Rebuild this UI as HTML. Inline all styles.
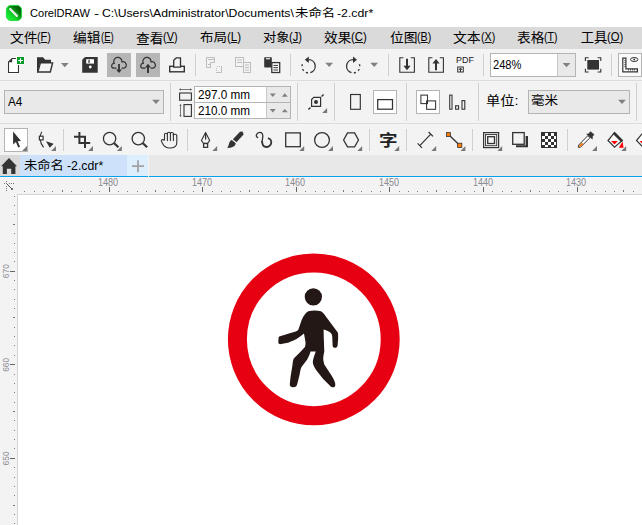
<!DOCTYPE html>
<html lang="zh-CN"><head><meta charset="utf-8"><title>CorelDRAW</title>
<style>
html,body{margin:0;padding:0;background:#fff;}
body{width:642px;height:525px;overflow:hidden;position:relative;font-family:"Liberation Sans","Noto Sans CJK SC",sans-serif;color:#000;}
#app{position:absolute;left:0;top:0;width:642px;height:525px;overflow:hidden;background:#fff;}
.abs{position:absolute;}
.t{position:absolute;white-space:nowrap;line-height:1;transform-origin:0 0;}
.menu{font-size:13px;top:30px;}
.menu u{text-decoration:underline;text-underline-offset:1px;}
svg{position:absolute;left:0;top:0;}
</style></head>
<body><div id="app">
<div class="abs" style="left:0;top:0;width:642px;height:27px;background:#fff"></div>
<div class="abs" style="left:0;top:27px;width:642px;height:22px;background:#dadada"></div>
<div class="abs" style="left:0;top:49px;width:642px;height:106px;background:#f3f3f3"></div>
<div class="abs" style="left:0;top:80px;width:642px;height:1px;background:#dcdcdc"></div>
<div class="abs" style="left:0;top:123px;width:642px;height:1px;background:#dcdcdc"></div>
<div class="abs" style="left:0;top:155px;width:642px;height:21px;background:#e8e8e8"></div>
<div class="abs" style="left:0;top:155px;width:20px;height:21px;background:#d9d9d9"></div>
<div class="abs" style="left:20px;top:155px;width:107px;height:21px;background:#cde2fa"></div>
<div class="abs" style="left:127px;top:155px;width:21px;height:21px;background:#ddeefd"></div>
<div class="abs" style="left:0;top:176px;width:642px;height:1px;background:#05a0ef"></div>
<div class="abs" style="left:0;top:177px;width:642px;height:1px;background:#faf5f0"></div>
<div class="abs" style="left:0;top:178px;width:642px;height:17px;background:#f3f3f3"></div>
<div class="abs" style="left:0;top:178px;width:18px;height:347px;background:#f3f3f3"></div>
<div class="abs" style="left:18px;top:195px;width:624px;height:330px;background:#fff"></div>
<div class="abs" style="left:18px;top:194px;width:624px;height:1px;background:#d5d5d5"></div>
<div class="abs" style="left:17px;top:194px;width:1px;height:331px;background:#d5d5d5"></div>
<div class="abs" style="left:107px;top:53px;width:24px;height:24px;background:#b6b6b6"></div>
<div class="abs" style="left:136px;top:53px;width:24px;height:24px;background:#b6b6b6"></div>
<div class="abs" style="left:490px;top:53px;width:84px;height:22px;background:#fff;border:1px solid #b4b4b4"></div>
<div class="abs" style="left:557px;top:54px;width:17px;height:22px;background:#e9e9e9;border-left:1px solid #c8c8c8"></div>
<div class="abs" style="left:618px;top:53px;width:22px;height:22px;background:#fafafa;border:1px solid #b4b4b4"></div>
<div class="abs" style="left:4px;top:90px;width:158px;height:22px;background:#e9e9e9;border:1px solid #b4b4b4"></div>
<div class="abs" style="left:194px;top:86px;width:95px;height:31px;background:#fff;border:1px solid #b4b4b4"></div>
<div class="abs" style="left:266px;top:87px;width:23px;height:31px;background:#e9e9e9;border-left:1px solid #c8c8c8"></div>
<div class="abs" style="left:195px;top:102px;width:95px;height:1px;background:#b4b4b4"></div>
<div class="abs" style="left:373px;top:90px;width:22px;height:22px;background:#fff;border:1px solid #b4b4b4"></div>
<div class="abs" style="left:416px;top:90px;width:22px;height:22px;background:#fff;border:1px solid #b4b4b4"></div>
<div class="abs" style="left:528px;top:90px;width:100px;height:22px;background:#e9e9e9;border:1px solid #b4b4b4"></div>
<div class="abs" style="left:4px;top:128px;width:22px;height:22px;background:#fff;border:1px solid #b4b4b4"></div>
<div class="t" id="ta" style="left:30.42px;top:8.02px;font-size:12px;font-weight:normal;transform:scale(0.9243,0.9459);">CorelDRAW</div>
<div class="t" id="tb" style="left:94.36px;top:8.02px;font-size:12px;font-weight:normal;transform:scale(1.2800,0.9459);">-</div>
<div class="t" id="tc" style="left:102.06px;top:8.02px;font-size:12px;font-weight:normal;transform:scale(1.0203,0.9459);">C:\Users\Administrator\Documents\</div>
<div class="t" id="td" style="left:294.50px;top:8.44px;font-size:12.5px;font-weight:normal;transform:scale(1.0733,0.9432);">未命名</div>
<div class="t" id="te" style="left:337.49px;top:8.02px;font-size:12px;font-weight:normal;transform:scale(1.0256,0.9459);">-2.cdr*</div>
<div class="t" id="m0a" style="left:10.45px;top:31.53px;font-size:13.3px;font-weight:normal;transform:scale(1.0353,0.9527);">文件</div>
<div class="t" id="m0b" style="left:37.27px;top:31.38px;font-size:13px;font-weight:normal;transform:scale(0.8331,0.9155);">(<u>F</u>)</div>
<div class="t" id="m1a" style="left:73.26px;top:31.42px;font-size:13.3px;font-weight:normal;transform:scale(1.0314,0.9615);">编辑</div>
<div class="t" id="m1b" style="left:100.66px;top:31.38px;font-size:13px;font-weight:normal;transform:scale(0.7370,0.9155);">(<u>E</u>)</div>
<div class="t" id="m2a" style="left:136.30px;top:31.55px;font-size:13.3px;font-weight:normal;transform:scale(1.0320,0.9704);">查看</div>
<div class="t" id="m2b" style="left:163.17px;top:31.25px;font-size:13px;font-weight:normal;transform:scale(0.8378,0.9250);">(<u>V</u>)</div>
<div class="t" id="m3a" style="left:200.36px;top:31.52px;font-size:13.3px;font-weight:normal;transform:scale(1.0171,0.9357);">布局</div>
<div class="t" id="m3b" style="left:226.52px;top:31.25px;font-size:13px;font-weight:normal;transform:scale(0.8912,0.9250);">(<u>L</u>)</div>
<div class="t" id="m4a" style="left:262.92px;top:31.52px;font-size:13.3px;font-weight:normal;transform:scale(1.0040,0.9357);">对象</div>
<div class="t" id="m4b" style="left:289.25px;top:31.38px;font-size:13px;font-weight:normal;transform:scale(0.8593,0.9155);">(<u>J</u>)</div>
<div class="t" id="m5a" style="left:324.23px;top:31.53px;font-size:13.3px;font-weight:normal;transform:scale(1.0257,0.9441);">效果</div>
<div class="t" id="m5b" style="left:351.13px;top:31.38px;font-size:13px;font-weight:normal;transform:scale(0.8788,0.9155);">(<u>C</u>)</div>
<div class="t" id="m6a" style="left:389.72px;top:31.53px;font-size:13.3px;font-weight:normal;transform:scale(1.0400,0.9527);">位图</div>
<div class="t" id="m6b" style="left:416.78px;top:31.38px;font-size:13px;font-weight:normal;transform:scale(0.8252,0.9155);">(<u>B</u>)</div>
<div class="t" id="m7a" style="left:453.25px;top:31.53px;font-size:13.3px;font-weight:normal;transform:scale(1.0365,0.9527);">文本</div>
<div class="t" id="m7b" style="left:480.58px;top:31.25px;font-size:13px;font-weight:normal;transform:scale(0.8252,0.9250);">(<u>X</u>)</div>
<div class="t" id="m8a" style="left:517.20px;top:31.53px;font-size:13.3px;font-weight:normal;transform:scale(1.0257,0.9527);">表格</div>
<div class="t" id="m8b" style="left:544.09px;top:31.38px;font-size:13px;font-weight:normal;transform:scale(0.8066,0.9155);">(<u>T</u>)</div>
<div class="t" id="m9a" style="left:580.67px;top:30.70px;font-size:13.3px;font-weight:normal;transform:scale(1.0000,1.0077);">工具</div>
<div class="t" id="m9b" style="left:607.24px;top:31.38px;font-size:13px;font-weight:normal;transform:scale(0.8696,0.9155);">(<u>O</u>)</div>
<div class="t" id="z" style="left:493.37px;top:58.21px;font-size:13px;font-weight:normal;transform:scale(0.8556,1.0054);">248%</div>
<div class="t" id="a4" style="left:7.90px;top:94.79px;font-size:13px;font-weight:normal;transform:scale(0.9008,1.0192);">A4</div>
<div class="t" id="w" style="left:197.74px;top:88.18px;font-size:13px;font-weight:normal;transform:scale(0.9009,0.9730);">297.0 mm</div>
<div class="t" id="h" style="left:197.74px;top:103.80px;font-size:13px;font-weight:normal;transform:scale(0.9009,0.9622);">210.0 mm</div>
<div class="t" id="unit" style="left:486.22px;top:95.26px;font-size:12.7px;font-weight:normal;transform:scale(1.1185,0.9882);">单位:</div>
<div class="t" id="mm" style="left:531.37px;top:95.26px;font-size:12.7px;font-weight:normal;transform:scale(1.0653,0.9786);">毫米</div>
<div class="t" id="taba" style="left:24.30px;top:160.47px;font-size:12.5px;font-weight:normal;transform:scale(1.0648,0.9684);">未命名</div>
<div class="t" id="tabb" style="left:67.39px;top:158.96px;font-size:12.5px;font-weight:normal;transform:scale(0.9837,1.0703);">-2.cdr*</div>
<div class="t" id="pdf" style="left:456.16px;top:57.32px;font-size:8px;font-weight:normal;transform:scale(1.1158,1.0800);color:#1a1a1a;">PDF</div>
<div class="t" id="zi" style="left:378.99px;top:133.45px;font-size:16px;font-weight:bold;transform:scale(1.1579,0.9701);color:#222;">字</div>
<div class="t" id="r0" style="left:98.12px;top:178.00px;font-size:9px;font-weight:normal;transform:scale(1.0053,1.1200);color:#8a8a92;">1480</div>
<div class="t" id="r1" style="left:191.72px;top:178.00px;font-size:9px;font-weight:normal;transform:scale(1.0053,1.1200);color:#8a8a92;">1470</div>
<div class="t" id="r2" style="left:285.32px;top:178.00px;font-size:9px;font-weight:normal;transform:scale(1.0053,1.1200);color:#8a8a92;">1460</div>
<div class="t" id="r3" style="left:378.92px;top:178.00px;font-size:9px;font-weight:normal;transform:scale(1.0053,1.1200);color:#8a8a92;">1450</div>
<div class="t" id="r4" style="left:472.52px;top:178.00px;font-size:9px;font-weight:normal;transform:scale(1.0053,1.1200);color:#8a8a92;">1440</div>
<div class="t" id="r5" style="left:566.12px;top:178.00px;font-size:9px;font-weight:normal;transform:scale(1.0053,1.1200);color:#8a8a92;">1430</div>
<svg width="642" height="525" viewBox="0 0 642 525">
<defs><linearGradient id="lg" x1="0.9" y1="0.1" x2="0.1" y2="0.9"><stop offset="0" stop-color="#005200"/><stop offset="0.3" stop-color="#087c10"/><stop offset="0.62" stop-color="#12cc26"/><stop offset="1" stop-color="#18f838"/></linearGradient></defs>
<rect x="6.4" y="5.4" width="15.2" height="15.2" rx="4.6" fill="url(#lg)" stroke="#22dc40" stroke-width="1"/>
<path d="M10.2 9 L16.9 15.9" stroke="#e6efe6" stroke-width="2.3" stroke-linecap="round"/>
<rect x="195" y="54" width="1" height="22" fill="#cfcfcf"/>
<rect x="290" y="54" width="1" height="22" fill="#cfcfcf"/>
<rect x="388" y="54" width="1" height="22" fill="#cfcfcf"/>
<rect x="483" y="54" width="1" height="22" fill="#cfcfcf"/>
<rect x="611" y="54" width="1" height="22" fill="#cfcfcf"/>
<path d="M12 58.5 H18.5 V72.5 H8.5 V62 Z" fill="#fff" stroke="#fbfbfb" stroke-width="3" stroke-linejoin="round"/>
<path d="M12 58.5 H18.5 V72.5 H8.5 V62 Z" fill="#fff" stroke="#333333" stroke-width="1.1" stroke-linejoin="miter"/>
<path d="M12.2 58.6 V62.2 H8.6 Z" fill="#333333"/>
<rect x="16" y="56" width="9" height="9" fill="#fbf8fa"/>
<rect x="17" y="57" width="7" height="7" fill="#0a9a2a"/>
<path d="M20.5 58.2 V62.8 M18.2 60.5 H22.8" stroke="#fff" stroke-width="1.1"/>
<path d="M37 72.5 V57.3 H43 L45.3 59.8 H51 V63 H40 L37.5 72.5 Z" fill="#333333"/>
<path d="M40.4 62.9 H52.6 L50.3 72 H37.8 Z" fill="#f3f3f3" stroke="#333333" stroke-width="1.4"/>
<path d="M60.9 63.050000000000004 H68.7 L64.8 67.35000000000001 Z" fill="#808080"/>
<path d="M85 57 H97.7 V72.7 H82.2 V59.8 Z" fill="#333333"/>
<rect x="86.2" y="59.2" width="7.8" height="4.4" fill="#fff"/>
<rect x="88.4" y="59.9" width="1.3" height="3" fill="#333333"/>
<circle cx="90.3" cy="67" r="1.4" fill="#fff"/>
<path transform="translate(0,0)" d="M116.4 68.2 H113.7 A2.35 2.35 0 1 1 114.3 63.5 A4.1 4.1 0 1 1 121.9 62 A3.2 3.2 0 0 1 124 68.2 H121.6" fill="none" stroke="#333333" stroke-width="1.2" stroke-linejoin="round"/>
<path d="M119 64 V70.2" stroke="#333333" stroke-width="1.8"/><path d="M116 69.6 H122 L119 73 Z" fill="#333333"/>
<path transform="translate(29.1,0)" d="M116.4 68.2 H113.7 A2.35 2.35 0 1 1 114.3 63.5 A4.1 4.1 0 1 1 121.9 62 A3.2 3.2 0 0 1 124 68.2 H121.6" fill="none" stroke="#333333" stroke-width="1.2" stroke-linejoin="round"/>
<path d="M148 66.6 V72.9" stroke="#333333" stroke-width="1.9"/><path d="M145 67.4 H151 L148 63.8 Z" fill="#333333"/>
<rect x="169.7" y="66.3" width="14.6" height="5.5" fill="none" stroke="#333333" stroke-width="1.4"/>
<path d="M173.7 67.2 V60.2 L176.2 57.9 H180.5 V67.2 Z" fill="#f3f3f3" stroke="#333333" stroke-width="1.3"/>
<path d="M206.5 57.5 H214.5 V62.5 H210.5 V67.5 H206.5 Z" fill="none" stroke="#bdbdbd" stroke-width="1"/>
<path d="M208 59.5 H214 M208 64.5 H210" stroke="#bdbdbd" stroke-width="1"/>
<path d="M221.5 66 V72.5 H216" fill="none" stroke="#bdbdbd" stroke-width="1"/>
<path d="M217 66.5 h1 m1 0 h1 M216.5 68 v1 m0 1 v1" stroke="#bdbdbd" stroke-width="1"/>
<rect x="235.5" y="57.5" width="8" height="9" fill="none" stroke="#bdbdbd" stroke-width="1"/>
<path d="M237 60 H242 M237 62.5 H242" stroke="#bdbdbd" stroke-width="1"/>
<rect x="243.5" y="62.5" width="7" height="10" fill="#f3f3f3" stroke="#bdbdbd" stroke-width="1"/>
<path d="M245 65 H249 M245 67.5 H249 M245 70 H249" stroke="#bdbdbd" stroke-width="1"/>
<rect x="264.2" y="57.2" width="7.6" height="10.4" rx="0.8" fill="#333333"/>
<rect x="266" y="58.2" width="4" height="1.1" fill="#fff"/>
<rect x="271.8" y="62.6" width="7.9" height="9.9" fill="#fff" stroke="#333333" stroke-width="1.3"/>
<path d="M273.4 65.4 H278 M273.4 67.7 H278 M273.4 70 H278" stroke="#333333" stroke-width="1"/>
<path d="M308.60 59.70 A6.6 6.6 0 0 1 310.31 72.68" fill="none" stroke="#333333" stroke-width="1.3"/>
<path d="M308.02 72.87 A6.6 6.6 0 0 1 302.40 64.04" fill="none" stroke="#333333" stroke-width="1.3" stroke-dasharray="2.2 2.6"/>
<path d="M308.8 56.4 V63 L304.8 59.7 Z" fill="#333333"/>
<path d="M325.3 62.65 H333.09999999999997 L329.2 66.95 Z" fill="#808080"/>
<path d="M353.20 59.70 A6.6 6.6 0 0 0 351.49 72.68" fill="none" stroke="#333333" stroke-width="1.3"/>
<path d="M353.78 72.87 A6.6 6.6 0 0 0 359.40 64.04" fill="none" stroke="#333333" stroke-width="1.3" stroke-dasharray="2.2 2.6"/>
<path d="M353 56.4 V63 L357 59.7 Z" fill="#333333"/>
<path d="M370.3 62.65 H378.09999999999997 L374.2 66.95 Z" fill="#808080"/>
<path d="M403.4 57.8 H399.8 V72.2 H414.4 V57.8 H410.8" fill="none" stroke="#333333" stroke-width="1.1"/>
<path d="M407 58.8 V67.5" stroke="#333333" stroke-width="2"/><path d="M403.4 65.8 H410.6 L407 70.2 Z" fill="#333333"/>
<path d="M432.4 57.8 H428.8 V72.2 H443.4 V57.8 H439.8" fill="none" stroke="#333333" stroke-width="1.1"/>
<path d="M436 62 V70.2" stroke="#333333" stroke-width="2"/><path d="M432.4 63.6 H439.6 L436 59 Z" fill="#333333"/>
<rect x="457.7" y="67" width="5.6" height="5" fill="none" stroke="#333333" stroke-width="1"/>
<path d="M460.5 72 V68.4 M458.8 70 L460.5 68 L462.2 70" fill="none" stroke="#333333" stroke-width="1"/>
<path d="M562.6 63.050000000000004 H570.4 L566.5 67.35000000000001 Z" fill="#808080"/>
<rect x="587.3" y="60" width="11.7" height="9.6" fill="#333333"/>
<path d="M585.4 61 V57.8 H588.6 M597.6 57.8 H600.8 V61 M600.8 68.8 V72 H597.6 M588.6 72 H585.4 V68.8" fill="none" stroke="#333333" stroke-width="1.1"/>
<path d="M622.8 58.2 H625.9 V68.8 H637.4 V71.9 H622.8 Z" fill="#fff" stroke="#333333" stroke-width="1.2"/>
<path d="M624.4 60.5 H625.6 M624.4 62.5 H625.6 M624.4 64.5 H625.6 M624.4 66.5 H625.6 M628.5 69.2 V70.5 M630.5 69.2 V70.5 M632.5 69.2 V70.5 M634.5 69.2 V70.5" stroke="#333333" stroke-width="0.9"/>
<ellipse cx="634.2" cy="59.5" rx="3.7" ry="2" fill="none" stroke="#333333" stroke-width="1"/><circle cx="634.2" cy="59.5" r="0.9" fill="#333333"/>
<rect x="170" y="83" width="1" height="38" fill="#cfcfcf"/>
<rect x="297" y="83" width="1" height="38" fill="#cfcfcf"/>
<rect x="334" y="83" width="1" height="38" fill="#cfcfcf"/>
<rect x="406" y="83" width="1" height="38" fill="#cfcfcf"/>
<rect x="478" y="83" width="1" height="38" fill="#cfcfcf"/>
<rect x="636" y="83" width="1" height="38" fill="#cfcfcf"/>
<path d="M152.1 99.64999999999999 H159.9 L156 103.95 Z" fill="#808080"/>
<rect x="179.6" y="93" width="11.8" height="7.2" fill="none" stroke="#333333" stroke-width="1.1"/>
<path d="M179.4 89.5 H191.6" stroke="#666" stroke-width="0.9"/><path d="M179 89.5 L181 88.3 V90.7 Z M192 89.5 L190 88.3 V90.7 Z" fill="#666"/>
<rect x="184" y="104.6" width="7.4" height="11.8" fill="none" stroke="#333333" stroke-width="1.1"/>
<path d="M180.5 104.4 V116.6" stroke="#666" stroke-width="0.9"/><path d="M180.5 104 L179.3 106 H181.7 Z M180.5 117 L179.3 115 H181.7 Z" fill="#666"/>
<path d="M269.8 93.5 H275.8 L272.8 96.9 Z" fill="#808080"/>
<path d="M281.8 96.7 H287.8 L284.8 93.3 Z" fill="#808080"/>
<path d="M269.8 109.1 H275.8 L272.8 112.5 Z" fill="#808080"/>
<path d="M281.8 112.3 H287.8 L284.8 108.89999999999999 Z" fill="#808080"/>
<path d="M313.8 97.4 H320.6 V106.4 H311.6 V99.6 Z" fill="none" stroke="#333333" stroke-width="1.2"/>
<circle cx="316" cy="102" r="2" fill="#333333"/>
<path d="M308.4 109.6 L310.5 107.5 M321.6 96.4 L323.6 94.4" stroke="#333333" stroke-width="1.4"/>
<path d="M327.1 113 V108.1 L322.20000000000005 113 Z" fill="#787878"/>
<rect x="350.6" y="94.5" width="9.7" height="14.8" fill="none" stroke="#333333" stroke-width="1.15"/>
<rect x="377.7" y="99.6" width="14.8" height="9.6" fill="none" stroke="#333333" stroke-width="1.25"/>
<rect x="420.9" y="95.1" width="6.6" height="8.5" fill="none" stroke="#333333" stroke-width="1.05"/>
<rect x="426.6" y="100.9" width="9" height="8.4" fill="none" stroke="#333333" stroke-width="1.05"/>
<rect x="449.7" y="95.1" width="2.3" height="14.1" fill="none" stroke="#333333" stroke-width="1.05"/>
<rect x="455.6" y="105.8" width="3" height="3.4" fill="none" stroke="#333333" stroke-width="1.1"/>
<rect x="462" y="100.6" width="2.8" height="8.6" fill="none" stroke="#333333" stroke-width="1.1"/>
<path d="M618.1 99.64999999999999 H625.9 L622 103.95 Z" fill="#808080"/>
<rect x="63" y="129" width="1" height="22" fill="#cfcfcf"/>
<rect x="187" y="129" width="1" height="22" fill="#cfcfcf"/>
<rect x="369" y="129" width="1" height="22" fill="#cfcfcf"/>
<rect x="406" y="129" width="1" height="22" fill="#cfcfcf"/>
<rect x="472" y="129" width="1" height="22" fill="#cfcfcf"/>
<rect x="567" y="129" width="1" height="22" fill="#cfcfcf"/>
<path d="M13.1 131.6 V144.6 L15.9 142 L18.2 147.6 L20 146.8 L17.7 141.3 L21 141 Z" fill="#333333"/>
<path d="M27 151 V146.1 L22.1 151 Z" fill="#787878"/>
<path d="M41.8 131.8 C39.2 136 39.4 142.5 43.6 147.4" fill="none" stroke="#333333" stroke-width="1.1"/>
<rect x="39.4" y="136.2" width="3.7" height="3.7" fill="#fff" stroke="#333333" stroke-width="1.2"/>
<path d="M46 141.2 L53.6 143.8 L49.8 147.8 Z" fill="#333333"/>
<path d="M56 151 V146.1 L51.1 151 Z" fill="#787878"/>
<path d="M79.4 132 V143 H90.2 M74 136.8 H85 V148" fill="none" stroke="#333333" stroke-width="2"/>
<path d="M93 151 V146.1 L88.1 151 Z" fill="#787878"/>
<circle cx="109.6" cy="138.6" r="6.2" fill="none" stroke="#333333" stroke-width="1.3"/><path d="M114.2 143.2 L118.4 147.2" stroke="#333333" stroke-width="2.2"/>
<path d="M121.8 151 V146.1 L116.89999999999999 151 Z" fill="#787878"/>
<circle cx="138.3" cy="138.6" r="6.2" fill="none" stroke="#333333" stroke-width="1.3"/><path d="M142.9 143.2 L147.1 147.2" stroke="#333333" stroke-width="2.2"/>
<path d="M164.5 140.4 V134.3 C164.5 132.8 167.4 132.8 167.4 134.3 V133.4 C167.4 131.9 170.4 131.9 170.4 133.4 C170.4 132.1 173.4 132.1 173.4 133.6 V135.4 C173.4 133.9 176.8 133.9 176.8 135.6 V142.4 C176.8 149.4 165.6 149.6 163 144.2 L161.5 141.4 C160.8 139.8 162.6 139 164.5 140.4" fill="none" stroke="#333333" stroke-width="1.1" stroke-linejoin="round"/>
<path d="M167.4 134 V140.6 M170.4 133.4 V140.6 M173.4 134 V140.6" stroke="#333333" stroke-width="1.1" stroke-linecap="round"/>
<path d="M205.6 132.4 L209.7 140.4 L207.7 143.2 H203.4 L201.4 140.4 Z" fill="none" stroke="#333333" stroke-width="1.1" stroke-linejoin="round"/>
<path d="M205.6 133.6 V139.6" stroke="#333333" stroke-width="1.3"/>
<rect x="203.6" y="143.6" width="4" height="3.7" fill="#fff" stroke="#333333" stroke-width="1.3"/>
<path d="M217.2 151 V146.1 L212.29999999999998 151 Z" fill="#787878"/>
<path d="M240 131.8 L242.6 131.6 L243.6 134.4 L236.4 142.2 L232.9 139.2 Z" fill="#333333"/>
<path d="M231.9 140 L235.7 143.3 C235.6 146.4 231.6 148.4 227 147.8 C229.6 145.8 228.2 141.2 231.9 140 Z" fill="#333333"/>
<path d="M232.2 139.4 L236.3 143" stroke="#f3f3f3" stroke-width="0.7"/>
<path d="M257.7 137.6 C256.4 137.2 256 135.6 256.5 134.6 C257.2 133 258.6 132.3 259.8 132.3 C261.6 132.3 262.7 133.8 262.8 136 C262.9 138.2 262 140 262.1 142" fill="none" stroke="#333333" stroke-width="1.3" stroke-linecap="round"/>
<path d="M262.1 141.6 C262.3 145.2 264 147 266.4 147 C269.4 147 271.6 144.4 271.3 141.6 C271.1 140 270 138.8 268.6 138.4" fill="none" stroke="#333333" stroke-width="1.8" stroke-linecap="round"/>
<rect x="285.7" y="132.9" width="14.6" height="13.8" fill="none" stroke="#333333" stroke-width="1.3"/>
<path d="M304.2 151 V146.1 L299.3 151 Z" fill="#787878"/>
<circle cx="322" cy="140" r="7.4" fill="none" stroke="#333333" stroke-width="1.3"/>
<path d="M333 151 V146.1 L328.1 151 Z" fill="#787878"/>
<path d="M343.6 140 L347.5 132.9 H354.6 L358.5 140 L354.6 146.8 H347.5 Z" fill="none" stroke="#333333" stroke-width="1.3"/>
<path d="M362.2 151 V146.1 L357.3 151 Z" fill="#787878"/>
<path d="M399.2 151 V146.1 L394.3 151 Z" fill="#787878"/>
<path d="M419.8 145.6 L430.8 134.2" stroke="#333333" stroke-width="1.2"/><path d="M417.6 143.4 L422 147.8 M428.6 132 L433 136.4" stroke="#333333" stroke-width="1.2"/>
<path d="M436.2 151 V146.1 L431.3 151 Z" fill="#787878"/>
<path d="M448.5 134.5 L459.6 145.3" stroke="#333333" stroke-width="1.3"/>
<rect x="446.5" y="132.6" width="4" height="4" fill="#ff7a00" stroke="#333333" stroke-width="0.8"/>
<rect x="457.6" y="143.2" width="4.2" height="4.2" fill="#ff7a00" stroke="#333333" stroke-width="0.8"/>
<path d="M465.4 151 V146.1 L460.5 151 Z" fill="#787878"/>
<rect x="483.6" y="132.6" width="15" height="15" fill="none" stroke="#333333" stroke-width="1.2"/>
<rect x="485.5" y="134.5" width="11.2" height="11.2" fill="none" stroke="#333333" stroke-width="0.9"/>
<rect x="487.7" y="136.7" width="6.8" height="6.8" fill="none" stroke="#333333" stroke-width="1.3"/>
<path d="M502.2 151 V146.1 L497.3 151 Z" fill="#787878"/>
<path d="M525.6 136.1 H528 V147.3 H516 V145.2 H525.6 Z" fill="#333333"/>
<rect x="512.7" y="132.6" width="11.5" height="11.7" fill="none" stroke="#333333" stroke-width="1.3"/>
<rect x="541" y="132" width="16" height="16" fill="#333333"/>
<path d="M542 136H545V139H542Z M542 142H545V145H542Z M545 133H548V136H545Z M545 139H548V142H545Z M545 145H548V147H545Z M548 136H551V139H548Z M548 142H551V145H548Z M551 133H554V136H551Z M551 139H554V142H551Z M551 145H554V147H551Z M554 136H556V139H554Z M554 142H556V145H554Z" fill="#fff"/>
<path d="M578.2 147.2 L578.6 145.2 L587.9 135.6 L590 137.7 L580.4 147.3 Z" fill="#fff" stroke="#333333" stroke-width="1" stroke-linejoin="round"/>
<path d="M578.7 146.9 L579.3 145.4 L582 142.7 L583.4 144.1 L580.4 146.8 Z" fill="#f47500"/>
<path d="M586.7 134.2 L588.3 133.9 L590.6 131.7 L594 134.6 L592.4 136.6 L592.3 139.1 Z" fill="#333333" stroke="#333333" stroke-width="0.6" stroke-linejoin="round"/>
<path d="M597 151 V146.1 L592.1 151 Z" fill="#787878"/>
<path d="M614.5 132.7 L622.2 140.5 L614.5 147.1 L608 140.5 Z" fill="#fff" stroke="#333333" stroke-width="1.2" stroke-linejoin="miter"/>
<path d="M614.5 131.8 L623.2 140.4 L621.3 142.3 L612.7 133.7 Z" fill="#333333"/>
<path d="M611 141.1 H617.9 L614.5 144.5 Z" fill="#ff0000"/>
<path d="M622.6 141.4 L623.5 147.7 H618.8 Z" fill="#ff0000"/>
<path d="M626.2 151 V146.1 L621.3000000000001 151 Z" fill="#787878"/>
<path d="M643 132.7 L636.5 140.5 L643 147.1" fill="#fff" stroke="#333333" stroke-width="1.2"/>
<path d="M639.6 141.1 H643 V144.5 Z" fill="#ff0000"/>
<path d="M9 158 L17 166.2 H15.4 V174 H11.2 V168.8 H6.9 V174 H2.8 V166.2 H1 Z" fill="#333333"/>
<path d="M138 160.2 V172.2 M132 166.2 H144" stroke="#a2a2a2" stroke-width="1.8"/>
<rect x="148" y="155" width="1" height="22" fill="#f4f4f4"/>
<g fill="#777"><rect x="4" y="183" width="1" height="1"/><rect x="6" y="183" width="1" height="1"/><rect x="9" y="183" width="1" height="1"/><rect x="11" y="183" width="1" height="1"/><rect x="13" y="183" width="1" height="1"/><rect x="6" y="181" width="1" height="1"/><rect x="6" y="186" width="1" height="1"/><rect x="6" y="188" width="1" height="1"/><rect x="6" y="190" width="1" height="1"/></g>
<path d="M7 184 L11.8 188.8" stroke="#4a4a4a" stroke-width="0.95"/><rect x="11.2" y="188.2" width="1.7" height="1.7" fill="#4a4a4a"/>
<rect x="24" y="191" width="1" height="1" fill="#808080"/><rect x="34" y="191" width="1" height="1" fill="#808080"/><rect x="43" y="191" width="1" height="1" fill="#808080"/><rect x="52" y="191" width="1" height="1" fill="#808080"/><rect x="62" y="190" width="1" height="2" fill="#777"/><rect x="71" y="191" width="1" height="1" fill="#808080"/><rect x="81" y="191" width="1" height="1" fill="#808080"/><rect x="90" y="191" width="1" height="1" fill="#808080"/><rect x="99" y="191" width="1" height="1" fill="#808080"/><rect x="109" y="187" width="1" height="5" fill="#666"/><rect x="118" y="191" width="1" height="1" fill="#808080"/><rect x="127" y="191" width="1" height="1" fill="#808080"/><rect x="137" y="191" width="1" height="1" fill="#808080"/><rect x="146" y="191" width="1" height="1" fill="#808080"/><rect x="155" y="190" width="1" height="2" fill="#777"/><rect x="165" y="191" width="1" height="1" fill="#808080"/><rect x="174" y="191" width="1" height="1" fill="#808080"/><rect x="183" y="191" width="1" height="1" fill="#808080"/><rect x="193" y="191" width="1" height="1" fill="#808080"/><rect x="202" y="187" width="1" height="5" fill="#666"/><rect x="212" y="191" width="1" height="1" fill="#808080"/><rect x="221" y="191" width="1" height="1" fill="#808080"/><rect x="230" y="191" width="1" height="1" fill="#808080"/><rect x="240" y="191" width="1" height="1" fill="#808080"/><rect x="249" y="190" width="1" height="2" fill="#777"/><rect x="258" y="191" width="1" height="1" fill="#808080"/><rect x="268" y="191" width="1" height="1" fill="#808080"/><rect x="277" y="191" width="1" height="1" fill="#808080"/><rect x="286" y="191" width="1" height="1" fill="#808080"/><rect x="296" y="187" width="1" height="5" fill="#666"/><rect x="305" y="191" width="1" height="1" fill="#808080"/><rect x="315" y="191" width="1" height="1" fill="#808080"/><rect x="324" y="191" width="1" height="1" fill="#808080"/><rect x="333" y="191" width="1" height="1" fill="#808080"/><rect x="343" y="190" width="1" height="2" fill="#777"/><rect x="352" y="191" width="1" height="1" fill="#808080"/><rect x="361" y="191" width="1" height="1" fill="#808080"/><rect x="371" y="191" width="1" height="1" fill="#808080"/><rect x="380" y="191" width="1" height="1" fill="#808080"/><rect x="389" y="187" width="1" height="5" fill="#666"/><rect x="399" y="191" width="1" height="1" fill="#808080"/><rect x="408" y="191" width="1" height="1" fill="#808080"/><rect x="417" y="191" width="1" height="1" fill="#808080"/><rect x="427" y="191" width="1" height="1" fill="#808080"/><rect x="436" y="190" width="1" height="2" fill="#777"/><rect x="446" y="191" width="1" height="1" fill="#808080"/><rect x="455" y="191" width="1" height="1" fill="#808080"/><rect x="464" y="191" width="1" height="1" fill="#808080"/><rect x="474" y="191" width="1" height="1" fill="#808080"/><rect x="483" y="187" width="1" height="5" fill="#666"/><rect x="492" y="191" width="1" height="1" fill="#808080"/><rect x="502" y="191" width="1" height="1" fill="#808080"/><rect x="511" y="191" width="1" height="1" fill="#808080"/><rect x="520" y="191" width="1" height="1" fill="#808080"/><rect x="530" y="190" width="1" height="2" fill="#777"/><rect x="539" y="191" width="1" height="1" fill="#808080"/><rect x="549" y="191" width="1" height="1" fill="#808080"/><rect x="558" y="191" width="1" height="1" fill="#808080"/><rect x="567" y="191" width="1" height="1" fill="#808080"/><rect x="577" y="187" width="1" height="5" fill="#666"/><rect x="586" y="191" width="1" height="1" fill="#808080"/><rect x="595" y="191" width="1" height="1" fill="#808080"/><rect x="605" y="191" width="1" height="1" fill="#808080"/><rect x="614" y="191" width="1" height="1" fill="#808080"/><rect x="623" y="190" width="1" height="2" fill="#777"/><rect x="633" y="191" width="1" height="1" fill="#808080"/>
<rect x="14" y="196" width="1" height="1" fill="#808080"/><rect x="14" y="205" width="1" height="1" fill="#808080"/><rect x="14" y="214" width="1" height="1" fill="#808080"/><rect x="13" y="224" width="2" height="1" fill="#777"/><rect x="14" y="233" width="1" height="1" fill="#808080"/><rect x="14" y="243" width="1" height="1" fill="#808080"/><rect x="14" y="252" width="1" height="1" fill="#808080"/><rect x="14" y="261" width="1" height="1" fill="#808080"/><rect x="10" y="271" width="5" height="1" fill="#666"/><rect x="14" y="280" width="1" height="1" fill="#808080"/><rect x="14" y="289" width="1" height="1" fill="#808080"/><rect x="14" y="299" width="1" height="1" fill="#808080"/><rect x="14" y="308" width="1" height="1" fill="#808080"/><rect x="13" y="317" width="2" height="1" fill="#777"/><rect x="14" y="327" width="1" height="1" fill="#808080"/><rect x="14" y="336" width="1" height="1" fill="#808080"/><rect x="14" y="345" width="1" height="1" fill="#808080"/><rect x="14" y="355" width="1" height="1" fill="#808080"/><rect x="10" y="364" width="5" height="1" fill="#666"/><rect x="14" y="374" width="1" height="1" fill="#808080"/><rect x="14" y="383" width="1" height="1" fill="#808080"/><rect x="14" y="392" width="1" height="1" fill="#808080"/><rect x="14" y="402" width="1" height="1" fill="#808080"/><rect x="13" y="411" width="2" height="1" fill="#777"/><rect x="14" y="420" width="1" height="1" fill="#808080"/><rect x="14" y="430" width="1" height="1" fill="#808080"/><rect x="14" y="439" width="1" height="1" fill="#808080"/><rect x="14" y="448" width="1" height="1" fill="#808080"/><rect x="10" y="458" width="5" height="1" fill="#666"/><rect x="14" y="467" width="1" height="1" fill="#808080"/><rect x="14" y="477" width="1" height="1" fill="#808080"/><rect x="14" y="486" width="1" height="1" fill="#808080"/><rect x="14" y="495" width="1" height="1" fill="#808080"/><rect x="13" y="505" width="2" height="1" fill="#777"/><rect x="14" y="514" width="1" height="1" fill="#808080"/><rect x="14" y="523" width="1" height="1" fill="#808080"/>
<text transform="translate(9,271.2) rotate(-90)" text-anchor="middle" font-family="Liberation Sans, sans-serif" font-size="9.6" fill="#8a8a92" textLength="14" lengthAdjust="spacingAndGlyphs">670</text>
<text transform="translate(9,364.8) rotate(-90)" text-anchor="middle" font-family="Liberation Sans, sans-serif" font-size="9.6" fill="#8a8a92" textLength="14" lengthAdjust="spacingAndGlyphs">660</text>
<text transform="translate(9,458.4) rotate(-90)" text-anchor="middle" font-family="Liberation Sans, sans-serif" font-size="9.6" fill="#8a8a92" textLength="14" lengthAdjust="spacingAndGlyphs">650</text>
<circle cx="313.8" cy="339.3" r="76.4" fill="#fff" stroke="#e60012" stroke-width="19"/>
<circle cx="313.35" cy="296.85" r="8.65" fill="#231815"/>
<path d="M308.3 311.3 C312 310.3 317 310.3 320.9 311.3 C323 312.5 324.5 314.5 325.5 315.9 L333.5 326.7 L337.6 332.2 C338.2 333.2 338.2 335 338.1 339.3 L337.6 345.4 C337.4 348.6 332.8 348.6 332.6 345.4 L332.3 337.6 C332.2 335.5 331.8 334.4 331.2 333.6 C330 332 327 330.2 323.6 329.6 L323.8 338.7 L324.3 351.4 C323.4 355 323 358.5 323.4 360.6 C323.8 362.5 324 363.8 324.3 364.6 L330 373.2 C332 376 333.5 378.5 334 380 C335 382.5 335.6 384 335.2 385.4 C334.8 387.6 332.2 388.2 330 385.7 L323.2 378.9 L316.3 370.3 C314.5 367.5 313 364.5 312.9 362.9 C312.8 360 313.6 358 315.7 351.6 L310.6 351.4 C309.8 354 308.5 357 307.2 359.4 L301.5 366.9 C300.5 369 300 372 299.7 374.3 L297.4 383.5 C296.8 386.4 295.6 387.2 293.2 387.2 C290.8 387.2 289.4 386 289.8 384 L290.6 376.6 L292.3 366.3 C292.8 362 293 360 294 358.3 L300.3 352 L304.9 346.9 C305.6 345 305.6 343.5 305.5 342.2 L304 333.6 C300 337 297 339 294.6 339.9 C291 341.5 289 342.3 287.7 342.7 L281.2 344.1 C278.8 344.6 278.2 343.2 278.3 341.6 L278.6 337.8 C278.7 336.6 279.5 336.4 280.9 336.1 L288.9 333.6 L295.7 331.5 C297.3 331 298.2 330.2 298.6 329 L300.9 322.2 C302 319 303 317 304.3 315.3 C305.5 313.5 306.8 312 308.3 311.3 Z" fill="#231815"/>
</svg>
</div></body></html>
